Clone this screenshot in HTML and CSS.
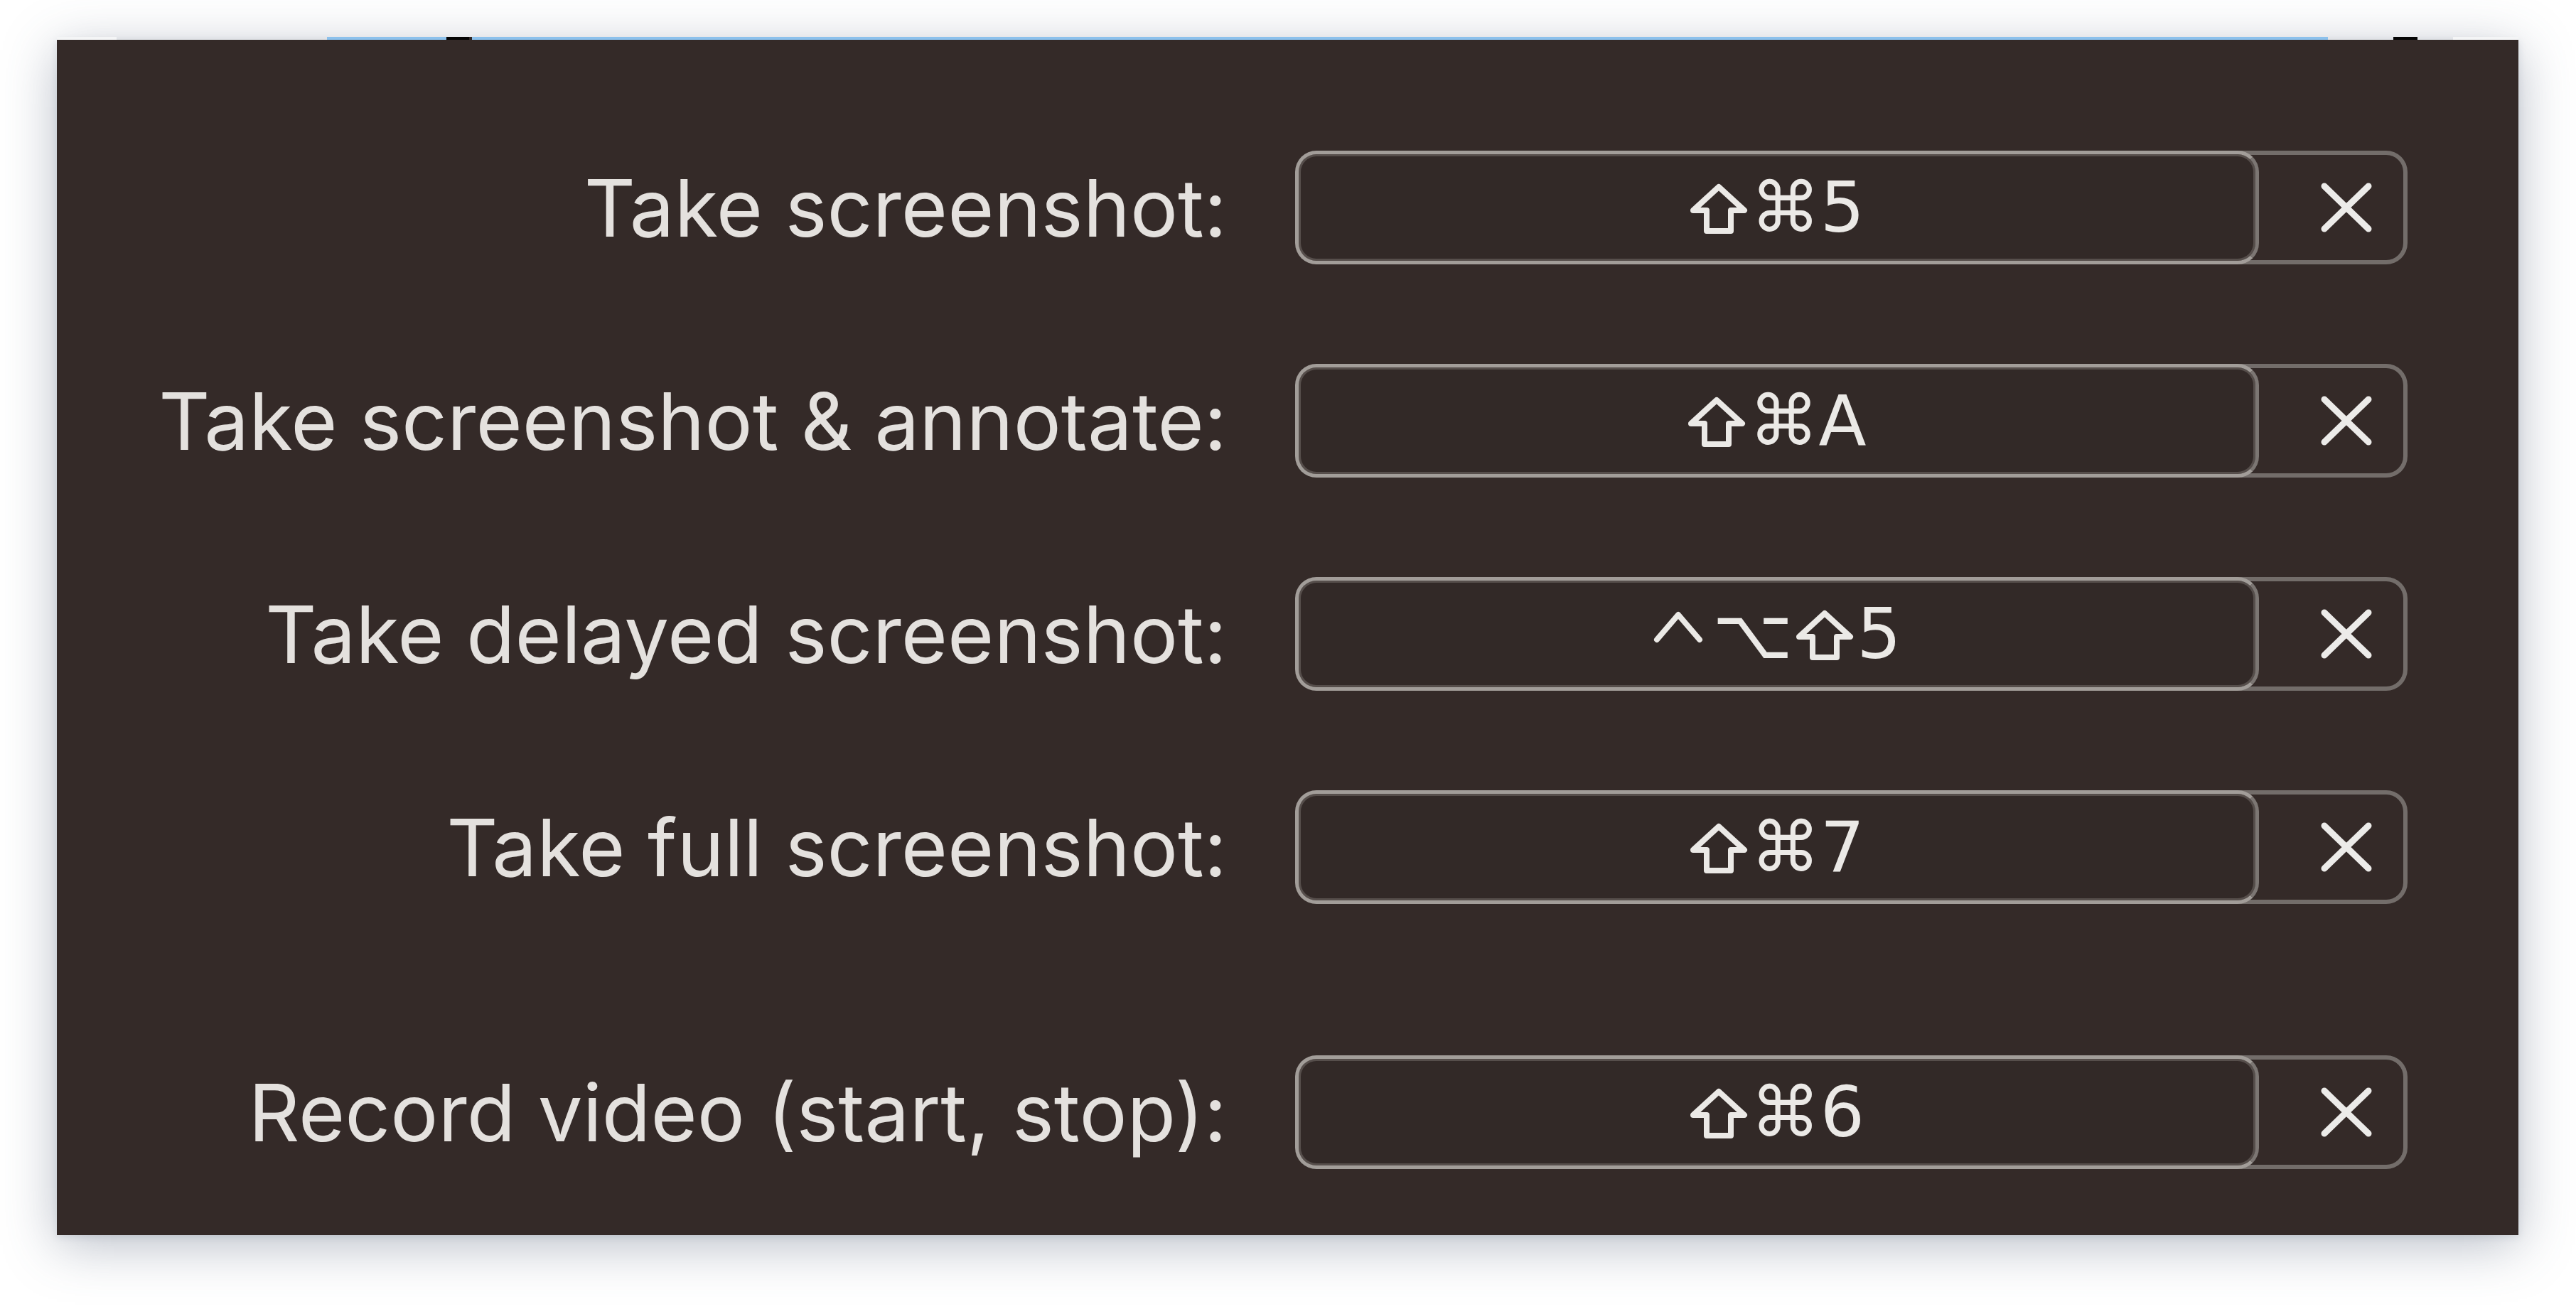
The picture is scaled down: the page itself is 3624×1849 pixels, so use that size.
FILE: index.html
```html
<!DOCTYPE html>
<html lang="en">
<head>
<meta charset="utf-8">
<title>Screenshots shortcuts</title>
<link rel="stylesheet" href="styles.css">
</head>
<body>
<div class="strip">
  <span class="seg seg-white s1"></span>
  <span class="seg s2"></span>
  <span class="seg seg-blue s3"></span>
  <span class="seg seg-black s4"></span>
  <span class="seg seg-dark s5"></span>
  <span class="seg seg-blue s6"></span>
  <span class="seg s7"></span>
  <span class="seg seg-black s8"></span>
  <span class="seg s9"></span>
  <span class="seg seg-white s10"></span>
</div>
<div class="panel">
  <div class="row">
    <div class="label">Take screenshot:</div>
    <div class="field">
      <div class="keys"><svg class="shift" viewBox="0 0 82 72" aria-label="⇧"><path d="M41 5 L77 38 L58 38 L58 67 L24 67 L24 38 L5 38 Z"/></svg><span>⌘5</span></div>
      <div class="clear"><svg class="x" viewBox="0 0 74 72"><path d="M6 6 L68 66 M68 6 L6 66"/></svg></div>
    </div>
  </div>
  <div class="row">
    <div class="label">Take screenshot &amp; annotate:</div>
    <div class="field">
      <div class="keys"><svg class="shift" viewBox="0 0 82 72" aria-label="⇧"><path d="M41 5 L77 38 L58 38 L58 67 L24 67 L24 38 L5 38 Z"/></svg><span>⌘A</span></div>
      <div class="clear"><svg class="x" viewBox="0 0 74 72"><path d="M6 6 L68 66 M68 6 L6 66"/></svg></div>
    </div>
  </div>
  <div class="row">
    <div class="label">Take delayed screenshot:</div>
    <div class="field">
      <div class="keys"><svg class="ctrl" viewBox="0 0 72 72" aria-label="⌃"><path d="M6 42 L36 7 L66 42"/></svg><span>⌥</span><svg class="shift" viewBox="0 0 82 72" aria-label="⇧"><path d="M41 5 L77 38 L58 38 L58 67 L24 67 L24 38 L5 38 Z"/></svg><span>5</span></div>
      <div class="clear"><svg class="x" viewBox="0 0 74 72"><path d="M6 6 L68 66 M68 6 L6 66"/></svg></div>
    </div>
  </div>
  <div class="row">
    <div class="label">Take full screenshot:</div>
    <div class="field">
      <div class="keys"><svg class="shift" viewBox="0 0 82 72" aria-label="⇧"><path d="M41 5 L77 38 L58 38 L58 67 L24 67 L24 38 L5 38 Z"/></svg><span>⌘7</span></div>
      <div class="clear"><svg class="x" viewBox="0 0 74 72"><path d="M6 6 L68 66 M68 6 L6 66"/></svg></div>
    </div>
  </div>
  <div class="row row-last">
    <div class="label">Record video (start, stop):</div>
    <div class="field">
      <div class="keys"><svg class="shift" viewBox="0 0 82 72" aria-label="⇧"><path d="M41 5 L77 38 L58 38 L58 67 L24 67 L24 38 L5 38 Z"/></svg><span>⌘6</span></div>
      <div class="clear"><svg class="x" viewBox="0 0 74 72"><path d="M6 6 L68 66 M68 6 L6 66"/></svg></div>
    </div>
  </div>
</div>
</body>
</html>
```

FILE: styles.css
```css
html, body {
  margin: 0;
  padding: 0;
  background: #ffffff;
}

body {
  width: 3624px;
  height: 1849px;
  overflow: hidden;
  font-family: "Inter", "DejaVu Sans", sans-serif;
}

.strip {
  display: flex;
  margin-top: 52px;
  margin-left: 80px;
  width: 3463px;
  height: 4px;
  position: relative;
  z-index: 2;
}

.seg { display: block; height: 4px; }
.seg-white { background: #f4f5f6; }
.seg-blue { background: #8cc1ec; }
.seg-black { background: #050505; }
.seg-dark { background: #2f2725; }
.s1 { width: 84px; }
.s2 { width: 296px; }
.s3 { width: 168px; }
.s4 { width: 32px; }
.s5 { width: 4px; }
.s6 { width: 2611px; }
.s7 { width: 92px; }
.s8 { width: 34px; }
.s9 { width: 50px; }
.s10 { width: 92px; }

.panel {
  margin-left: 80px;
  width: 3463px;
  height: 1682px;
  box-sizing: border-box;
  background: #342a28;
  padding: 156px 156px 0 0;
  display: flex;
  flex-direction: column;
  gap: 140px;
  box-shadow: 0 14px 70px rgba(70, 85, 110, 0.38), 0 2px 10px rgba(70, 85, 110, 0.15);
  position: relative;
}

.row {
  display: flex;
  align-items: center;
  justify-content: flex-end;
  gap: 96px;
  height: 160px;
}

.row-last {
  margin-top: 73px;
}

.label {
  color: #e4e1de;
  font-size: 112px;
  white-space: nowrap;
  text-align: right;
}

.field {
  display: flex;
  width: 1565px;
  height: 160px;
  flex: none;
}

.keys {
  width: 1356px;
  height: 160px;
  box-sizing: border-box;
  border: 5px solid #a29d99;
  border-right-color: #7c7673;
  border-radius: 30px;
  box-shadow: inset 0 0 0 3px #564e4b;
  background: #322927;
  color: #ebe9e6;
  font-family: "DejaVu Sans", "Inter", sans-serif;
  font-size: 98px;
  display: flex;
  align-items: center;
  justify-content: center;
  gap: 4px;
  position: relative;
  z-index: 1;
  flex: none;
}

.keys span {
  line-height: 1;
}

.ctrl {
  width: 72px;
  height: 72px;
  margin-top: 4px;
  margin-right: 8px;
  fill: none;
  stroke: #ebe9e6;
  stroke-width: 8;
  stroke-linecap: round;
  stroke-linejoin: round;
}

.shift {
  width: 82px;
  height: 72px;
  margin-top: 4px;
  fill: none;
  stroke: #ebe9e6;
  stroke-width: 8;
  stroke-linejoin: round;
}

.clear {
  flex: 1;
  height: 160px;
  box-sizing: border-box;
  margin-left: -30px;
  padding-left: 72px;
  border: 6px solid #736d6a;
  border-left: none;
  border-radius: 0 30px 30px 0;
  display: flex;
  align-items: center;
  justify-content: center;
}

.x {
  width: 74px;
  height: 72px;
  fill: none;
  stroke: #ecebe9;
  stroke-width: 9;
  stroke-linecap: round;
}
```
